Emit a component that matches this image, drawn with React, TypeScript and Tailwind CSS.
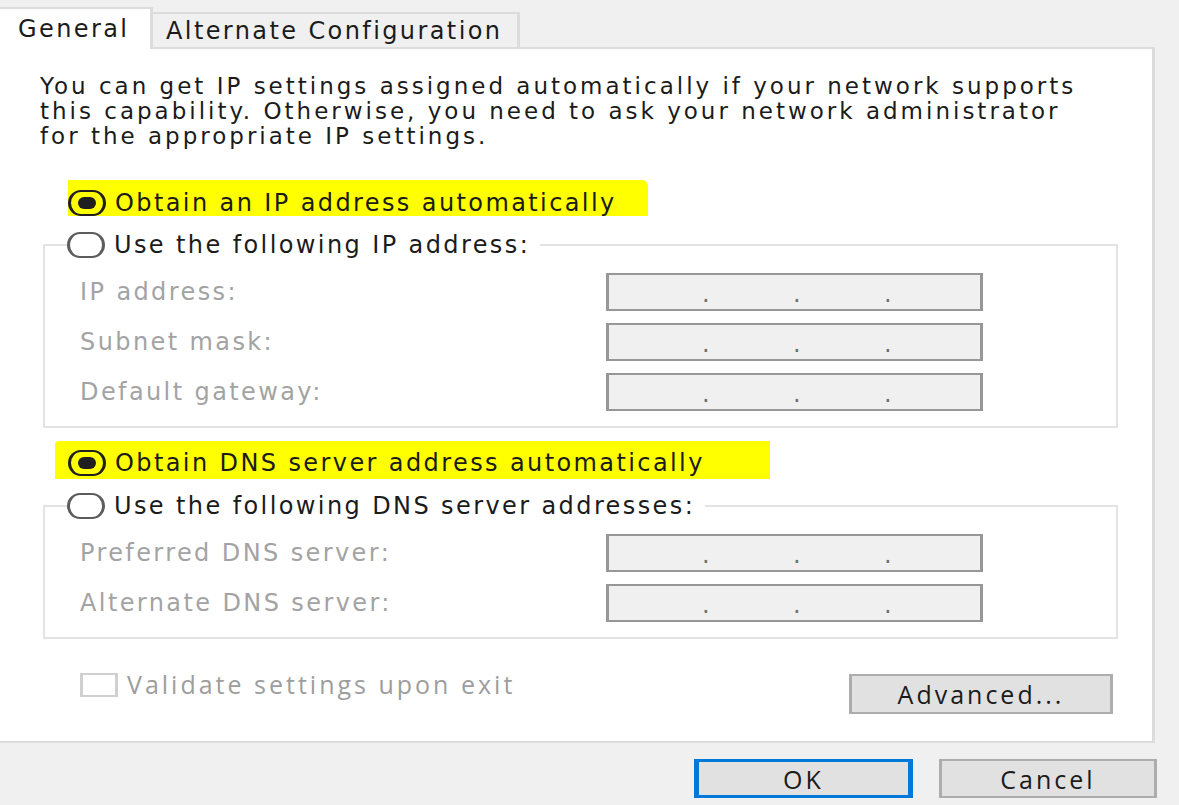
import type { ReactNode } from 'react'

// ---------------------------------------------------------------------------
// Small Win32-style controls (the screenshot is stretched, so the shapes are too)
// ---------------------------------------------------------------------------

function Radio({ checked }: { checked?: boolean }) {
  return (
    <span
      className={
        checked
          ? 'flex items-center justify-center w-[38px] h-[26px] shrink-0 rounded-full border-x-[3px] border-y-2 border-[#1f1f1f]'
          : 'flex items-center justify-center w-[38px] h-[26px] shrink-0 rounded-full border-x-[3px] border-y-2 border-[#5c5c5c] bg-white'
      }
    >
      {checked && <span className="w-[18px] h-[12px] rounded-full bg-[#1f1f1f]" />}
    </span>
  )
}

function IpBox() {
  return (
    <div className="w-[377px] h-[38px] shrink-0 border-x-[3px] border-y-2 border-[#979797] bg-[#f0f0f0] flex leading-[34px] text-[#707070] pl-[93px] pt-[2px]">
      <span className="w-[91px]">.</span>
      <span className="w-[91px]">.</span>
      <span className="w-[91px]">.</span>
    </div>
  )
}

function FieldRow({ label }: { label: string }) {
  return (
    <div className="flex items-center h-[38px] pl-[35px] pr-[133px]">
      <span className="flex-1 text-[#a3a3a3]">{label}</span>
      <IpBox />
    </div>
  )
}

function Group({ legend, children }: { legend: string; children: ReactNode }) {
  return (
    <fieldset className="ml-[43px] w-[1075px] border-2 border-[#e3e3e3] pb-[15px]">
      <legend className="ml-[22px] pr-[10px] flex items-center gap-[9px] h-[26px]">
        <Radio />
        <span>{legend}</span>
      </legend>
      <div className="mt-[15px] flex flex-col gap-[12px]">{children}</div>
    </fieldset>
  )
}

// ---------------------------------------------------------------------------
// Dialog
// ---------------------------------------------------------------------------

export default function App() {
  return (
    <div className="w-[1179px] h-[805px] overflow-hidden bg-[#f0f0f0] font-['DejaVu_Sans',sans-serif] text-[24px] tracking-[2.4px] text-[#1b1b1b]">
      {/* tabs */}
      <div className="flex items-end h-[47px]">
        <div className="relative z-10 -mb-[2px] -ml-[1px] w-[154px] h-[42px] bg-white border-t-2 border-r-[3px] border-[#dcdcdc] pl-[19px] pt-[8px] leading-[25px]">
          General
        </div>
        <div className="w-[367px] h-[35px] bg-[#f0f0f0] border-t-2 border-r-[3px] border-[#dcdcdc] pl-[13px] flex items-center">
          Alternate Configuration
        </div>
      </div>

      {/* panel */}
      <div className="-ml-[3px] w-[1158px] h-[696px] bg-white border-x-[3px] border-y-2 border-[#dcdcdc] flex flex-col">
        <p className="mt-[25px] pl-[40px] text-[23px] tracking-[3px] leading-[25px]">
          You can get IP settings assigned automatically if your network supports
          <br />
          this capability. Otherwise, you need to ask your network administrator
          <br />
          for the appropriate IP settings.
        </p>

        <div className="mt-[31px] ml-[68px] w-[580px] h-[36px] bg-[#ffff00] rounded-tr-[6px] flex items-end">
          <div className="flex items-center gap-[9px] h-[26px]">
            <Radio checked />
            <span>Obtain an IP address automatically</span>
          </div>
        </div>

        <div className="mt-[16px]">
          <Group legend="Use the following IP address:">
            <FieldRow label="IP address:" />
            <FieldRow label="Subnet mask:" />
            <FieldRow label="Default gateway:" />
          </Group>
        </div>

        <div className="mt-[13px] ml-[55px] w-[715px] h-[38px] bg-[#ffff00] rounded-tl-[4px] pl-[13px] pt-[9px]">
          <div className="flex items-center gap-[9px] h-[26px]">
            <Radio checked />
            <span>Obtain DNS server address automatically</span>
          </div>
        </div>

        <div className="mt-[14px]">
          <Group legend="Use the following DNS server addresses:">
            <FieldRow label="Preferred DNS server:" />
            <FieldRow label="Alternate DNS server:" />
          </Group>
        </div>

        <div className="mt-[34px] flex items-start pl-[80px] pr-[39px]">
          <div className="flex items-center gap-[9px] h-[24px]">
            <span className="w-[38px] h-[24px] border-x-[3px] border-y-2 border-[#d0d0d0] bg-white" />
            <span className="font-['Open_Sans',sans-serif] text-[25px] tracking-[3px] text-[#9d9d9d]">Validate settings upon exit</span>
          </div>
          <button className="ml-auto mt-[1px] w-[264px] h-[40px] bg-[#e1e1e1] border-x-[3px] border-y-2 border-[#adadad] font-['Open_Sans',sans-serif] text-[25px] tracking-[3px] text-[#1b1b1b] leading-[34px]">
            Advanced...
          </button>
        </div>
      </div>

      {/* dialog buttons */}
      <div className="mt-[16px] flex justify-end gap-[26px] pr-[22px]">
        <button className="w-[219px] h-[39px] bg-[#e1e1e1] border-x-[5px] border-y-[3px] border-[#0078d7] font-['Open_Sans',sans-serif] text-[25px] tracking-[3px] leading-[32px]">
          OK
        </button>
        <button className="w-[218px] h-[39px] bg-[#e1e1e1] border-x-[3px] border-y-2 border-[#adadad] font-['Open_Sans',sans-serif] text-[25px] tracking-[3px] leading-[34px]">
          Cancel
        </button>
      </div>
    </div>
  )
}
